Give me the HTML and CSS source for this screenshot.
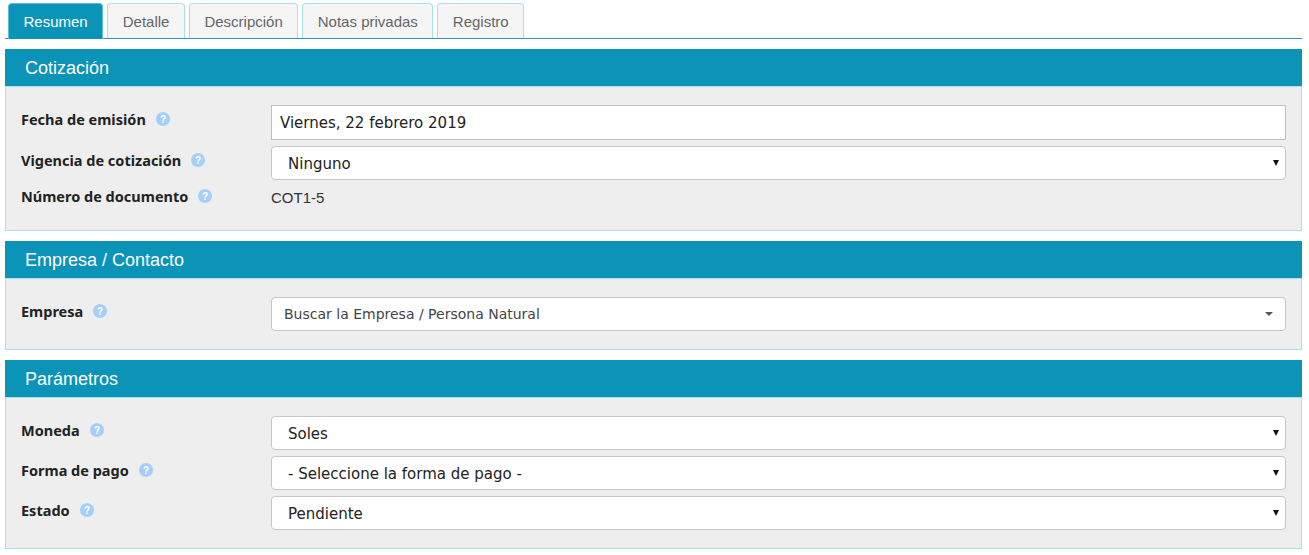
FILE: index.html
```html
<!DOCTYPE html>
<html lang="es">
<head>
<meta charset="utf-8">
<title>Cotización</title>
<link rel="stylesheet" href="styles.css">
</head>
<body>
<nav class="tabs">
  <a class="tab active">Resumen</a>
  <a class="tab">Detalle</a>
  <a class="tab">Descripción</a>
  <a class="tab">Notas privadas</a>
  <a class="tab">Registro</a>
</nav>

<section class="panel">
  <h2 class="panel-title">Cotización</h2>
  <div class="panel-body">
    <div class="row row-date">
      <label class="label">Fecha de emisión <svg class="help" viewBox="0 0 14 14"><circle cx="7" cy="7" r="7"/><text x="7" y="10.5" text-anchor="middle">?</text></svg></label>
      <input class="control date" type="text" value="Viernes, 22 febrero 2019">
    </div>
    <div class="row">
      <label class="label">Vigencia de cotización <svg class="help" viewBox="0 0 14 14"><circle cx="7" cy="7" r="7"/><text x="7" y="10.5" text-anchor="middle">?</text></svg></label>
      <select class="control select"><option>Ninguno</option></select>
    </div>
    <div class="row row-static">
      <label class="label">Número de documento <svg class="help" viewBox="0 0 14 14"><circle cx="7" cy="7" r="7"/><text x="7" y="10.5" text-anchor="middle">?</text></svg></label>
      <span class="static">COT1-5</span>
    </div>
  </div>
</section>

<section class="panel">
  <h2 class="panel-title">Empresa / Contacto</h2>
  <div class="panel-body">
    <div class="row">
      <label class="label">Empresa <svg class="help" viewBox="0 0 14 14"><circle cx="7" cy="7" r="7"/><text x="7" y="10.5" text-anchor="middle">?</text></svg></label>
      <div class="control combo"><span>Buscar la Empresa / Persona Natural</span><i class="caret"></i></div>
    </div>
  </div>
</section>

<section class="panel">
  <h2 class="panel-title">Parámetros</h2>
  <div class="panel-body">
    <div class="row">
      <label class="label">Moneda <svg class="help" viewBox="0 0 14 14"><circle cx="7" cy="7" r="7"/><text x="7" y="10.5" text-anchor="middle">?</text></svg></label>
      <select class="control select"><option>Soles</option></select>
    </div>
    <div class="row">
      <label class="label">Forma de pago <svg class="help" viewBox="0 0 14 14"><circle cx="7" cy="7" r="7"/><text x="7" y="10.5" text-anchor="middle">?</text></svg></label>
      <select class="control select"><option>- Seleccione la forma de pago -</option></select>
    </div>
    <div class="row">
      <label class="label">Estado <svg class="help" viewBox="0 0 14 14"><circle cx="7" cy="7" r="7"/><text x="7" y="10.5" text-anchor="middle">?</text></svg></label>
      <select class="control select"><option>Pendiente</option></select>
    </div>
  </div>
</section>
</body>
</html>
```
FILE: styles.css
```css
* { box-sizing: border-box; }
html, body { margin: 0; background: #fff; }
body {
  padding: 3px 7px 0 5px;
  font-family: "Liberation Sans", Arial, sans-serif;
  font-size: 15px;
  color: #333;
}

.tabs {
  display: flex;
  align-items: flex-start;
  gap: 4px;
  height: 36px;
  padding-left: 3px;
  border-bottom: 1px solid #3a8ec4;
}
.tab {
  display: flex;
  align-items: center;
  height: 35px;
  padding: 0 14.5px;
  background: #f5f5f5;
  border: 1px solid #a6e1f0;
  border-bottom: 0;
  border-radius: 4px 4px 0 0;
  color: #666;
}
.tab.active {
  height: 36px;
  padding-bottom: 1px;
  background: #0b93b8;
  border-color: #5dbdd6;
  color: #fff;
}

.panel { margin-top: 10px; }
.panel-title {
  margin: 0;
  height: 37px;
  padding: 0 20px;
  background: #0b93b8;
  color: #fff;
  font-size: 18px;
  font-weight: 400;
  line-height: 38px;
}
.panel-body {
  display: flex;
  flex-direction: column;
  gap: 6px;
  padding: 18px 15px;
  background: #eee;
  border: 1px solid #a6e1f0;
}

.row {
  display: flex;
  align-items: flex-start;
}
.row-static {
  height: 30px;
  margin-top: -4px;
}

.label {
  display: flex;
  align-items: center;
  flex: 0 0 250px;
  height: 28px;
  font-family: "Noto Sans", Tahoma, sans-serif;
  font-size: 14.5px;
  font-weight: 700;
  color: #222;
}
.help {
  width: 14px;
  height: 14px;
  margin-left: 10px;
  flex: none;
}
.help circle { fill: #a5cffa; }
.help text {
  fill: #fff;
  font-family: "Liberation Sans", sans-serif;
  font-size: 10px;
  font-weight: 700;
}

.control {
  flex: 1;
  height: 34px;
  background: #fff;
  border: 1px solid #c6c6c6;
  font-family: "DejaVu Sans", Verdana, sans-serif;
  font-size: 15px;
  color: #222;
}
.date {
  height: 35px;
  padding: 1px 8px 0;
  border-color: #bfbfbf;
  border-radius: 0;
  outline: 0;
}
.select {
  appearance: none;
  -webkit-appearance: none;
  padding: 2px 16px 0;
  border-radius: 4px;
  background-image: url("data:image/svg+xml,%3Csvg xmlns='http://www.w3.org/2000/svg' width='6' height='6'%3E%3Cpath d='M0 0h6L3 6z' fill='%23111'/%3E%3C/svg%3E");
  background-repeat: no-repeat;
  background-position: right 6px center;
}
.combo {
  display: flex;
  align-items: center;
  justify-content: space-between;
  padding: 0 12px;
  border-radius: 4px;
  font-size: 14px;
  color: #444;
}
.caret {
  width: 0;
  height: 0;
  border: 4px solid transparent;
  border-top-color: #555;
  border-bottom: 0;
}
.static {
  padding-top: 7px;
}
```
